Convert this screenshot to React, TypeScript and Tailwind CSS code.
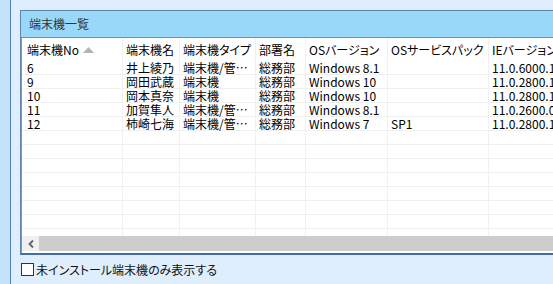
// 端末機一覧パネル — 一覧表 + 未インストール絞り込みチェック

type Row = {
  no: string;
  name: string;
  type: string;
  dept: string;
  os: string;
  sp: string;
  ie: string;
};

const rows: Row[] = [
  { no: '6', name: '井上綾乃', type: '端末機/管…', dept: '総務部', os: 'Windows 8.1', sp: '', ie: '11.0.6000.16' },
  { no: '9', name: '岡田武蔵', type: '端末機', dept: '総務部', os: 'Windows 10', sp: '', ie: '11.0.2800.11…' },
  { no: '10', name: '岡本真奈', type: '端末機', dept: '総務部', os: 'Windows 10', sp: '', ie: '11.0.2800.11…' },
  { no: '11', name: '加賀隼人', type: '端末機/管…', dept: '総務部', os: 'Windows 8.1', sp: '', ie: '11.0.2600.00…' },
  { no: '12', name: '柿崎七海', type: '端末機/管…', dept: '総務部', os: 'Windows 7', sp: 'SP1', ie: '11.0.2800.11…' },
];

const empty: Row = { no: '', name: '', type: '', dept: '', os: '', sp: '', ie: '' };
const allRows = [...rows, ...Array.from({ length: 9 }, () => empty)];

// セル幅（右の罫線込み）
const cell = 'shrink-0 border-r border-[#f0f0f0] pl-[3px] overflow-x-clip whitespace-nowrap';

function SortUp() {
  return (
    <svg width="11" height="6" viewBox="0 0 11 6" className="ml-[4px] mt-[1px]">
      <polygon points="5.5,0 11,6 0,6" fill="#b3b3b3" />
    </svg>
  );
}

function RowCells({ r }: { r: Row }) {
  return (
    <>
      <div className={`${cell} w-[101px] pl-[5px]`}>{r.no}</div>
      <div className={`${cell} w-[57px]`}>{r.name}</div>
      <div className={`${cell} w-[76px]`}>{r.type}</div>
      <div className={`${cell} w-[50px]`}>{r.dept}</div>
      <div className={`${cell} w-[82px]`}>{r.os}</div>
      <div className={`${cell} w-[101px]`}>{r.sp}</div>
      <div className={`${cell} w-[90px]`}>{r.ie}</div>
    </>
  );
}

export default function App() {
  return (
    <div className="w-[553px] h-[284px] overflow-hidden bg-[#deeefc] flex font-['Noto_Sans_CJK_JP','Liberation_Sans',sans-serif] [font-feature-settings:'palt'] text-[12px] text-black">
      {/* 左のサイドバー端 */}
      <div className="w-[11px] shrink-0 bg-[#c4e3fa] border-r border-[#5282bf]" />

      <div className="flex flex-col pl-[9px] pt-[10px] min-w-0">
        {/* パネル本体 */}
        <div className="w-[570px] border-l border-t border-[#5f83ad] bg-white">
          <div className="h-[27px] bg-[#99d8f8] border-b border-[#6394c4] flex items-center pl-[8px] text-[#333]">
            端末機一覧
          </div>

          <div className="border-l border-[#8a97a8] pb-[2px]">
            <div className="h-[198px] overflow-hidden">
              {/* 見出し行 */}
              <div className="flex h-[23px] items-center leading-[23px]">
                <div className={`${cell} w-[101px] pl-[5px] flex items-center`}>
                  端末機No
                  <SortUp />
                </div>
                <div className={`${cell} w-[57px]`}>端末機名</div>
                <div className={`${cell} w-[76px]`}>端末機タイプ</div>
                <div className={`${cell} w-[50px]`}>部署名</div>
                <div className={`${cell} w-[82px]`}>OSバージョン</div>
                <div className={`${cell} w-[101px]`}>OSサービスパック</div>
                <div className={`${cell} w-[90px]`}>IEバージョン</div>
              </div>

              {allRows.map((r, i) => (
                <div key={i} className="flex h-[14px] leading-[13px] border-b border-[#f0f0f0]">
                  <RowCells r={r} />
                </div>
              ))}
            </div>

            {/* 横スクロールバー */}
            <div className="h-[15px] flex bg-[#cdcdcd]">
              <div className="w-[17px] bg-[#f0f0f0] flex items-center justify-center">
                <svg width="6" height="8" viewBox="0 0 6 8">
                  <polyline points="5,0.5 1.5,4 5,7.5" fill="none" stroke="#606060" strokeWidth="1.8" />
                </svg>
              </div>
            </div>
          </div>

          <div className="h-[2px] bg-[#3f6ea8]" />
        </div>

        {/* 絞り込みチェック */}
        <label className="flex items-center mt-[8px] ml-[1px] gap-[2px] h-[13px]">
          <span className="w-[13px] h-[13px] border border-[#333] bg-white shrink-0" />
          <span className="leading-[13px] text-[#111]">未インストール端末機のみ表示する</span>
        </label>
      </div>
    </div>
  );
}
